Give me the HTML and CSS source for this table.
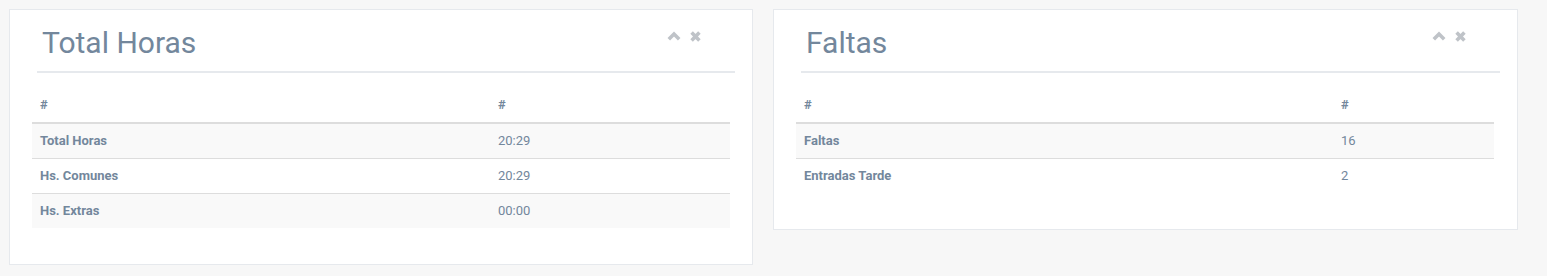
FILE: index.html
```html
<!DOCTYPE html>
<html lang="es">
<head>
<meta charset="utf-8">
<title>Panel</title>
<link rel="stylesheet" href="styles.css">
</head>
<body>
<div class="row">
  <section class="panel panel-hours">
    <header class="x-title">
      <h2>Total Horas</h2>
      <ul class="tools">
        <li><svg class="ico ico-up" width="14" height="10" viewBox="0 0 14 10"><path d="M1.8 8.3 L7 3.1 L12.2 8.3" fill="none" stroke="#BFC3C8" stroke-width="3.6"/></svg></li>
        <li><svg class="ico" width="11" height="11" viewBox="0 0 11 11"><path d="M1.6 1.6 L9.4 9.4 M9.4 1.6 L1.6 9.4" fill="none" stroke="#BFC3C8" stroke-width="3.6"/></svg></li>
      </ul>
    </header>
    <table class="tbl">
      <thead><tr><th class="c1-hours">#</th><th>#</th></tr></thead>
      <tbody>
        <tr><th class="lbl">Total Horas</th><td>20:29</td></tr>
        <tr><th class="lbl">Hs. Comunes</th><td>20:29</td></tr>
        <tr><th class="lbl">Hs. Extras</th><td>00:00</td></tr>
      </tbody>
    </table>
  </section>
  <section class="panel panel-faltas">
    <header class="x-title">
      <h2>Faltas</h2>
      <ul class="tools">
        <li><svg class="ico ico-up" width="14" height="10" viewBox="0 0 14 10"><path d="M1.8 8.3 L7 3.1 L12.2 8.3" fill="none" stroke="#BFC3C8" stroke-width="3.6"/></svg></li>
        <li><svg class="ico" width="11" height="11" viewBox="0 0 11 11"><path d="M1.6 1.6 L9.4 9.4 M9.4 1.6 L1.6 9.4" fill="none" stroke="#BFC3C8" stroke-width="3.6"/></svg></li>
      </ul>
    </header>
    <table class="tbl">
      <thead><tr><th class="c1-faltas">#</th><th>#</th></tr></thead>
      <tbody>
        <tr><th class="lbl">Faltas</th><td>16</td></tr>
        <tr><th class="lbl">Entradas Tarde</th><td>2</td></tr>
      </tbody>
    </table>
  </section>
</div>
</body>
</html>
```

FILE: styles.css
```css
html, body {
  margin: 0;
  padding: 0;
}
body {
  background: #F7F7F7;
  font-family: Roboto, "Liberation Sans", sans-serif;
  color: #73879C;
  font-size: 13px;
}
.row {
  display: flex;
  align-items: flex-start;
  gap: 20px;
  padding: 9px 0 0 9px;
}
.panel {
  box-sizing: border-box;
  width: 744px;
  background: #fff;
  border: 1px solid #E6E9ED;
  padding: 0 0 36px 0;
}
.panel-faltas {
  width: 745px;
}
.x-title {
  display: flex;
  align-items: flex-start;
  justify-content: space-between;
  margin: 0 17px 0 27px;
  padding: 15px 0 10px 5px;
  border-bottom: 2px solid #E6E9ED;
}
.x-title h2 {
  margin: 0;
  font-size: 30px;
  line-height: 36px;
  font-weight: 400;
  color: #73879C;
}
.tools {
  list-style: none;
  margin: 6px 34px 0 0;
  padding: 0;
  display: flex;
  align-items: flex-start;
  gap: 9px;
}
.tools li {
  display: block;
}
.ico {
  display: block;
}
.ico-up {
  margin-top: 0;
}
.tbl {
  border-collapse: separate;
  border-spacing: 0;
  margin: 15px 0 0 22px;
  width: 698px;
}
.tbl th, .tbl td {
  padding: 8px;
  line-height: 18px;
  text-align: left;
  vertical-align: top;
  color: #73879C;
}
.tbl thead th {
  font-weight: 700;
  border-bottom: 2px solid #DDDDDD;
}
.tbl tbody th.lbl {
  font-weight: 700;
}
.tbl tbody td {
  font-weight: 400;
}
.tbl tbody tr + tr th,
.tbl tbody tr + tr td {
  border-top: 1px solid #DDDDDD;
}
.tbl tbody tr:nth-child(odd) th,
.tbl tbody tr:nth-child(odd) td {
  background: #F9F9F9;
}
.c1-hours {
  width: 442px;
}
.c1-faltas {
  width: 521px;
}
```
